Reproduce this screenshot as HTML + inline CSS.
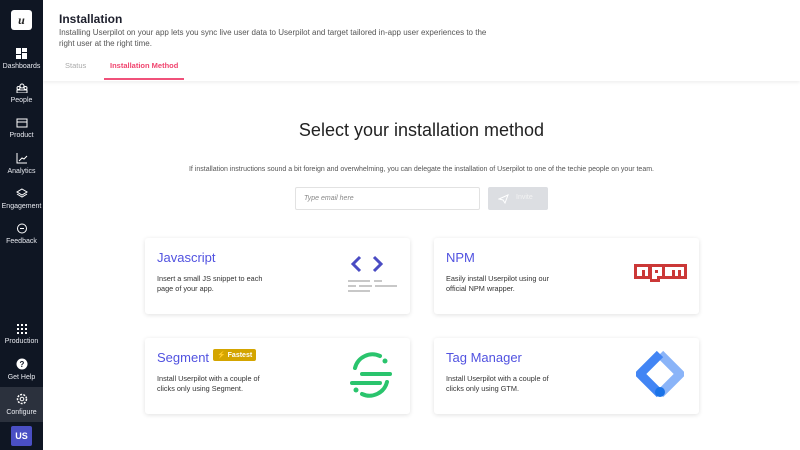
<!DOCTYPE html><html><head><style>
*{margin:0;padding:0;box-sizing:border-box}
body{width:800px;height:450px;overflow:hidden;font-family:"Liberation Sans",sans-serif;background:#fff;position:relative}
.sb{position:absolute;left:0;top:0;width:43px;height:450px;background:#0f1623}
.ni{position:absolute;left:0;width:43px;text-align:center;color:#e8eaf0;font-size:7px}
.ni svg{display:block;margin:0 auto 4px}
.hdr{position:absolute;left:43px;top:0;right:0;height:81px;background:#fff;box-shadow:0 2px 3px rgba(0,0,0,.06)}
.card{position:absolute;width:265px;height:76px;background:#fff;border-radius:3px;box-shadow:0 1px 5px rgba(0,0,0,.12)}
.card h3{position:absolute;left:12px;top:12px;font-size:13px;font-weight:normal;color:#5152e0}
.card p{position:absolute;left:12px;top:36px;font-size:7.3px;line-height:10px;color:#333;width:112px}
</style></head><body>
<div class="hdr">
<div style="position:absolute;left:16px;top:12px;font-size:12px;font-weight:bold;color:#1d1f2c">Installation</div>
<div style="position:absolute;left:16px;top:27px;font-size:8px;line-height:11px;color:#555;width:432px">Installing Userpilot on your app lets you sync live user data to Userpilot and target tailored in-app user experiences to the right user at the right time.</div>
<div style="position:absolute;left:22px;top:61px;font-size:7.5px;color:#aaa">Status</div>
<div style="position:absolute;left:67px;top:61px;font-size:7.5px;color:#f0446e;font-weight:bold">Installation Method</div>
<div style="position:absolute;left:61px;top:78px;width:80px;height:2px;background:#f0517a"></div>
</div>
<div class="sb">
<div style="position:absolute;left:11px;top:10px;width:21px;height:20px;background:#fff;border-radius:3px;text-align:center;font:italic bold 12px 'Liberation Serif',serif;line-height:20px;color:#222">u</div>
<div class="ni" style="top:48px"><svg width="11" height="11"><rect x="0" y="0" width="5" height="6" fill="#fff"/><rect x="6" y="0" width="5" height="4" fill="#fff"/><rect x="0" y="7" width="5" height="4" fill="#fff"/><rect x="6" y="5" width="5" height="6" fill="#fff"/></svg>Dashboards</div>
<div class="ni" style="top:83px"><svg width="12" height="10"><circle cx="6" cy="3" r="2" stroke="#fff" fill="none"/><circle cx="2.5" cy="5" r="1.5" stroke="#fff" fill="none"/><circle cx="9.5" cy="5" r="1.5" stroke="#fff" fill="none"/><rect x="1" y="7" width="10" height="3" stroke="#fff" fill="none"/></svg>People</div>
<div class="ni" style="top:118px"><svg width="12" height="10"><rect x="1" y="1" width="10" height="8" stroke="#fff" fill="none"/><line x1="1" y1="4" x2="11" y2="4" stroke="#fff"/></svg>Product</div>
<div class="ni" style="top:153px"><svg width="12" height="11"><path d="M1 0V10H11M3 8L6 5L8 6L11 3" stroke="#fff" fill="none"/></svg>Analytics</div>
<div class="ni" style="top:188px"><svg width="12" height="11"><path d="M6 1L11 4L6 7L1 4Z M1 6L6 9L11 6" stroke="#fff" fill="none"/></svg>Engagement</div>
<div class="ni" style="top:223px"><svg width="12" height="11"><circle cx="6" cy="5.5" r="4.5" stroke="#fff" fill="none"/><line x1="4" y1="5.5" x2="8" y2="5.5" stroke="#fff"/></svg>Feedback</div>
<div class="ni" style="top:324px"><svg width="10" height="10" fill="#fff"><rect x="0" y="0" width="2" height="2"/><rect x="4" y="0" width="2" height="2"/><rect x="8" y="0" width="2" height="2"/><rect x="0" y="4" width="2" height="2"/><rect x="4" y="4" width="2" height="2"/><rect x="8" y="4" width="2" height="2"/><rect x="0" y="8" width="2" height="2"/><rect x="4" y="8" width="2" height="2"/><rect x="8" y="8" width="2" height="2"/></svg>Production</div>
<div class="ni" style="top:358px"><svg width="12" height="12"><circle cx="6" cy="6" r="5.5" fill="#fff"/><text x="6" y="9" font-size="8" font-weight="bold" text-anchor="middle" fill="#0f1623">?</text></svg>Get Help</div>
<div style="position:absolute;left:0;top:387px;width:43px;height:35px;background:#2b313d"></div>
<div class="ni" style="top:393px"><svg width="12" height="12"><circle cx="6" cy="6" r="4.5" stroke="#fff" stroke-width="1.5" stroke-dasharray="2 1.2" fill="none"/><circle cx="6" cy="6" r="1.8" stroke="#fff" fill="none"/></svg>Configure</div>
<div style="position:absolute;left:11px;top:426px;width:21px;height:20px;background:#4a4fc4;border-radius:2px;color:#fff;font-size:9px;font-weight:bold;text-align:center;line-height:20px">US</div>
</div>
<div style="position:absolute;left:43px;right:0;top:120px;text-align:center;font-size:18px;color:#222">Select your installation method</div>
<div style="position:absolute;left:43px;right:0;top:166px;text-align:center;font-size:7px;color:#555">If installation instructions sound a bit foreign and overwhelming, you can delegate the installation of Userpilot to one of the techie people on your team.</div>
<div style="position:absolute;left:295px;top:187px;width:185px;height:23px;border:1px solid #e2e2e2;border-radius:2px;font-size:7px;font-style:italic;color:#888;padding:7px 8px">Type email here</div>
<div style="position:absolute;left:488px;top:187px;width:60px;height:23px;background:#dcdee2;border-radius:2px;color:#f3f3f3;font-size:7px;padding:7px 0 0 28px"><svg width="11" height="10" style="position:absolute;left:10px;top:7px"><path d="M1 5L10 1L7 9L5 6Z" stroke="#fff" fill="none"/></svg>Invite</div>
<div class="card" style="left:145px;top:238px"><h3>Javascript</h3><p>Insert a small JS snippet to each page of your app.</p>
<svg style="position:absolute;left:203px;top:17px" width="50" height="38"><path d="M12 2L5 9L12 16M26 2L33 9L26 16" stroke="#4a4cc3" stroke-width="3" fill="none"/><g stroke="#c8c8c8" stroke-width="2"><line x1="0" y1="26" x2="22" y2="26"/><line x1="26" y1="26" x2="34" y2="26"/><line x1="0" y1="31" x2="8" y2="31"/><line x1="11" y1="31" x2="24" y2="31"/><line x1="27" y1="31" x2="49" y2="31"/><line x1="0" y1="36" x2="22" y2="36"/></g></svg></div>
<div class="card" style="left:434px;top:238px"><h3>NPM</h3><p>Easily install Userpilot using our official NPM wrapper.</p>
<svg style="position:absolute;left:200px;top:26px" width="53" height="18"><path d="M0 0H53V15H26V18H16V15H0Z" fill="#cb3837"/><path d="M3 3H14V12H11V6H8V12H3Z M18 3H28V12H23V15H18Z M31 3H50V12H47V6H44V12H41V6H38V12H31Z" fill="#fff"/><rect x="21" y="6" width="3" height="3" fill="#cb3837"/></svg></div>
<div class="card" style="left:145px;top:338px"><h3>Segment</h3><p>Install Userpilot with a couple of clicks only using Segment.</p>
<div style="position:absolute;left:68px;top:11px;background:#d4a500;color:#fff;font-size:7px;padding:2px 4px;border-radius:2px;font-weight:bold">⚡ Fastest</div>
<svg style="position:absolute;left:205px;top:14px" width="42" height="46"><g stroke="#2ac46d" stroke-width="4" stroke-linecap="round" fill="none"><path d="M5 16A18 18 0 0 1 30 4"/><path d="M37 30A18 18 0 0 1 12 42"/><line x1="12" y1="22" x2="40" y2="22"/><line x1="2" y1="31" x2="30" y2="31"/></g><circle cx="35" cy="9" r="2.5" fill="#2ac46d"/><circle cx="6" cy="38" r="2.5" fill="#2ac46d"/></svg></div>
<div class="card" style="left:434px;top:338px"><h3>Tag Manager</h3><p>Install Userpilot with a couple of clicks only using GTM.</p>
<svg style="position:absolute;left:202px;top:12px" width="48" height="50"><path d="M24 4L44 24L24 44" stroke="#8ab4f8" stroke-width="9" fill="none" stroke-linejoin="round"/><path d="M24 4L4 24L24 44" stroke="#4285f4" stroke-width="9" fill="none" stroke-linejoin="round"/><circle cx="24" cy="42" r="5" fill="#1a73e8"/></svg></div>
</body></html>
